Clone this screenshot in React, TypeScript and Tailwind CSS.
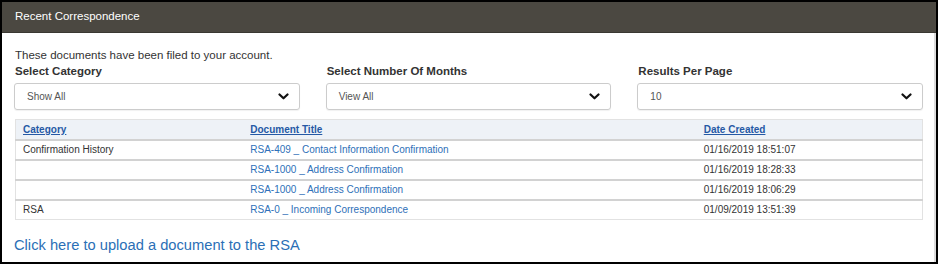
import React from 'react';

const font = { fontFamily: '"Liberation Sans", Arial, sans-serif' };

type Row = { category: string; title: string; date: string };

const rows: Row[] = [
  { category: 'Confirmation History', title: 'RSA-409 _ Contact Information Confirmation', date: '01/16/2019 18:51:07' },
  { category: '', title: 'RSA-1000 _ Address Confirmation', date: '01/16/2019 18:28:33' },
  { category: '', title: 'RSA-1000 _ Address Confirmation', date: '01/16/2019 18:06:29' },
  { category: 'RSA', title: 'RSA-0 _ Incoming Correspondence', date: '01/09/2019 13:51:39' },
];

const filters = [
  { label: 'Select Category', value: 'Show All' },
  { label: 'Select Number Of Months', value: 'View All' },
  { label: 'Results Per Page', value: '10' },
];

const Chevron: React.FC = () => (
  <svg width="11" height="7" viewBox="0 0 11 7" className="shrink-0">
    <polyline points="1.5,1.5 5.5,5.3 9.5,1.5" fill="none" stroke="#111" strokeWidth="2.2" strokeLinecap="round" strokeLinejoin="round" />
  </svg>
);

export default function App() {
  return (
    <div className="w-[938px] h-[264px] bg-white" style={font}>
      <div className="h-full border-2 border-black flex flex-col">
        <div className="h-[31px] bg-[#4b4841] border-b border-[#3a3832] flex items-center pl-[13px]">
          <span className="text-white text-[11.5px]">Recent Correspondence</span>
        </div>
        <div className="flex-1 border-r-2 border-[#dcdcdc] pl-[12px] pr-[11px] pt-[14px]">
          <p className="text-[11.5px] leading-[16px] text-[#333] pl-[1px]">These documents have been filed to your account.</p>
          <div className="grid grid-cols-3 gap-[26px]">
            {filters.map((f) => (
              <div key={f.label}>
                <div className="text-[11.5px] leading-[16px] font-bold text-[#333] pl-[1px] mb-[4px]">{f.label}</div>
                <div className="h-[27px] border border-[#cccccc] rounded-[3px] shadow-[0_1px_1px_rgba(0,0,0,0.06)] flex items-center justify-between pl-[12px] pr-[10px]">
                  <span className="text-[10px] text-[#555]">{f.value}</span>
                  <Chevron />
                </div>
              </div>
            ))}
          </div>
          <table className="w-[908px] ml-[1px] mt-[9px] border border-[#e2e2e2] text-[10px] border-collapse">
            <thead>
              <tr className="bg-[#eef2f7] h-[20px]">
                <th className="w-1/4 text-left font-bold pl-[7px]"><a className="underline text-[#2559a5]">Category</a></th>
                <th className="w-1/2 text-left font-bold pl-[8px]"><a className="underline text-[#2559a5]">Document Title</a></th>
                <th className="w-1/4 text-left font-bold pl-[8px]"><a className="underline text-[#2559a5]">Date Created</a></th>
              </tr>
            </thead>
            <tbody>
              {rows.map((r, i) => (
                <tr key={i} className="h-[20px] border-t-2 border-[#d2d2d2]">
                  <td className="pl-[7px] text-[#333]">{r.category}</td>
                  <td className="pl-[8px] text-[#2e70b8]">{r.title}</td>
                  <td className="pl-[8px] text-[#333]">{r.date}</td>
                </tr>
              ))}
            </tbody>
          </table>
          <div className="mt-[16px] text-[14.7px] leading-[18px] text-[#2b6fb6]">Click here to upload a document to the RSA</div>
        </div>
      </div>
    </div>
  );
}
